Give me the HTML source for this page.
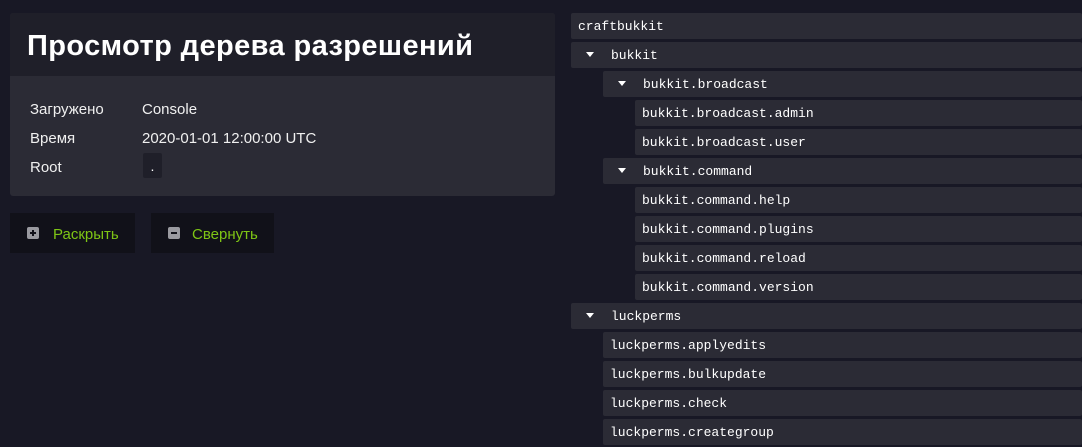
<!DOCTYPE html>
<html><head><meta charset="utf-8"><style>
body{margin:0;width:1082px;height:446px;background:#181825;overflow:hidden;font-family:"Liberation Sans","Noto Sans CJK SC",sans-serif;position:relative}
.card{position:absolute;left:10px;top:13px;width:545px;height:183px;background:#2b2b35;border-radius:3px;overflow:hidden}
.hd{height:63px;background:#1f1f29;color:#fff;font-weight:bold;font-size:29px;line-height:66px;padding-left:17px;letter-spacing:0.4px}
.kv{position:absolute;left:20px;font-size:15px;color:#f0f0f0}
.vv{position:absolute;left:132px;font-size:15px;color:#f0f0f0}
.btn{position:absolute;top:213px;height:40px;background:#111119;color:#7ec515;font-size:15px;line-height:44px}
.btn i{position:absolute;left:17px;top:14px;width:12px;height:12px;background:#9a9aa0;border-radius:2px}
.btn i:before{content:"";position:absolute;left:3px;top:5px;width:6px;height:2px;background:#111119}
.btn i.p:after{content:"";position:absolute;left:5px;top:3px;width:2px;height:6px;background:#111119}
.r{position:absolute;right:0;height:26px;background:#2b2b35;border-radius:2px;color:#fff;font-family:"Liberation Mono",monospace;font-size:13px;line-height:28px}
.r span{position:absolute}
.t{position:absolute;left:15px;top:10px;width:0;height:0;border-left:4px solid transparent;border-right:4px solid transparent;border-top:5px solid #fff}
</style></head><body>
<div class="card">
<div class="hd">Просмотр дерева разрешений</div>
<div class="kv" style="top:88px">Загружено</div><div class="vv" style="top:88px">Console</div>
<div class="kv" style="top:117px">Время</div><div class="vv" style="top:117px">2020-01-01 12:00:00 UTC</div>
<div class="kv" style="top:146px">Root</div>
<div style="position:absolute;left:133px;top:140px;width:19px;height:25px;background:#1f1f29;border-radius:2px;color:#fff;font-size:14px;text-align:center;line-height:26px">.</div>
</div>
<div class="btn" style="left:10px;width:125px"><i class="p"></i><span style="position:absolute;left:43px">Раскрыть</span></div>
<div class="btn" style="left:151px;width:123px"><i></i><span style="position:absolute;left:41px">Свернуть</span></div>

<div class="r" style="left:571px;top:13px"><span style="left:7px">craftbukkit</span></div>
<div class="r" style="left:571px;top:42px"><i class="t"></i><span style="left:40px">bukkit</span></div>
<div class="r" style="left:603px;top:71px"><i class="t"></i><span style="left:40px">bukkit.broadcast</span></div>
<div class="r" style="left:635px;top:100px"><span style="left:7px">bukkit.broadcast.admin</span></div>
<div class="r" style="left:635px;top:129px"><span style="left:7px">bukkit.broadcast.user</span></div>
<div class="r" style="left:603px;top:158px"><i class="t"></i><span style="left:40px">bukkit.command</span></div>
<div class="r" style="left:635px;top:187px"><span style="left:7px">bukkit.command.help</span></div>
<div class="r" style="left:635px;top:216px"><span style="left:7px">bukkit.command.plugins</span></div>
<div class="r" style="left:635px;top:245px"><span style="left:7px">bukkit.command.reload</span></div>
<div class="r" style="left:635px;top:274px"><span style="left:7px">bukkit.command.version</span></div>
<div class="r" style="left:571px;top:303px"><i class="t"></i><span style="left:40px">luckperms</span></div>
<div class="r" style="left:603px;top:332px"><span style="left:7px">luckperms.applyedits</span></div>
<div class="r" style="left:603px;top:361px"><span style="left:7px">luckperms.bulkupdate</span></div>
<div class="r" style="left:603px;top:390px"><span style="left:7px">luckperms.check</span></div>
<div class="r" style="left:603px;top:419px"><span style="left:7px">luckperms.creategroup</span></div>
</body></html>
